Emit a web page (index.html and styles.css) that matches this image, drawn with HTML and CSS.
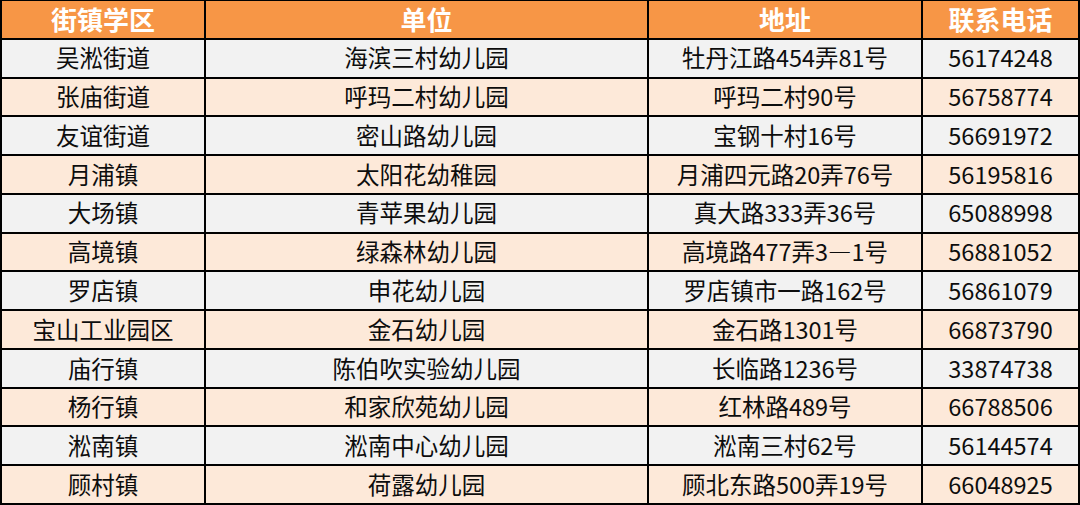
FILE: index.html
```html
<!DOCTYPE html>
<html lang="zh-CN">
<head>
<meta charset="utf-8">
<title>宝山区幼儿园</title>
<link rel="stylesheet" href="styles.css">
</head>
<body>
<div class="table">
  <div class="row head"><div class="cell">街镇学区</div><div class="cell">单位</div><div class="cell">地址</div><div class="cell">联系电话</div></div>
  <div class="row gray"><div class="cell">吴淞街道</div><div class="cell">海滨三村幼儿园</div><div class="cell">牡丹江路454弄81号</div><div class="cell">56174248</div></div>
  <div class="row peach"><div class="cell">张庙街道</div><div class="cell">呼玛二村幼儿园</div><div class="cell">呼玛二村90号</div><div class="cell">56758774</div></div>
  <div class="row gray"><div class="cell">友谊街道</div><div class="cell">密山路幼儿园</div><div class="cell">宝钢十村16号</div><div class="cell">56691972</div></div>
  <div class="row peach"><div class="cell">月浦镇</div><div class="cell">太阳花幼稚园</div><div class="cell">月浦四元路20弄76号</div><div class="cell">56195816</div></div>
  <div class="row gray"><div class="cell">大场镇</div><div class="cell">青苹果幼儿园</div><div class="cell">真大路333弄36号</div><div class="cell">65088998</div></div>
  <div class="row peach"><div class="cell">高境镇</div><div class="cell">绿森林幼儿园</div><div class="cell">高境路477弄3—1号</div><div class="cell">56881052</div></div>
  <div class="row gray"><div class="cell">罗店镇</div><div class="cell">申花幼儿园</div><div class="cell">罗店镇市一路162号</div><div class="cell">56861079</div></div>
  <div class="row peach"><div class="cell">宝山工业园区</div><div class="cell">金石幼儿园</div><div class="cell">金石路1301号</div><div class="cell">66873790</div></div>
  <div class="row gray"><div class="cell">庙行镇</div><div class="cell">陈伯吹实验幼儿园</div><div class="cell">长临路1236号</div><div class="cell">33874738</div></div>
  <div class="row peach"><div class="cell">杨行镇</div><div class="cell">和家欣苑幼儿园</div><div class="cell">红林路489号</div><div class="cell">66788506</div></div>
  <div class="row gray"><div class="cell">淞南镇</div><div class="cell">淞南中心幼儿园</div><div class="cell">淞南三村62号</div><div class="cell">56144574</div></div>
  <div class="row peach"><div class="cell">顾村镇</div><div class="cell">荷露幼儿园</div><div class="cell">顾北东路500弄19号</div><div class="cell">66048925</div></div>
</div>
</body>
</html>
```

FILE: styles.css
```css
html, body {
  margin: 0;
  padding: 0;
  background: #ffffff;
}
body {
  font-family: "Noto Sans CJK SC", "Noto Sans", sans-serif;
  color: #0d0d0d;
}
.table {
  box-sizing: border-box;
  width: 1080px;
  height: 505px;
  display: grid;
  grid-template-columns: 202px 441px 272px 155px;
  grid-template-rows: repeat(13, 1fr);
  gap: 2px;
  padding: 1px 2px 2px 2px;
  background: #000000;
}
.row {
  display: contents;
}
.cell {
  display: flex;
  align-items: center;
  justify-content: center;
  font-size: 23.5px;
  line-height: 1;
  white-space: nowrap;
}
.head .cell {
  background: #f79646;
  color: #ffffff;
  font-weight: bold;
  font-size: 26px;
}
.gray .cell {
  background: #f2f2f2;
}
.peach .cell {
  background: #fde9d9;
}
```
